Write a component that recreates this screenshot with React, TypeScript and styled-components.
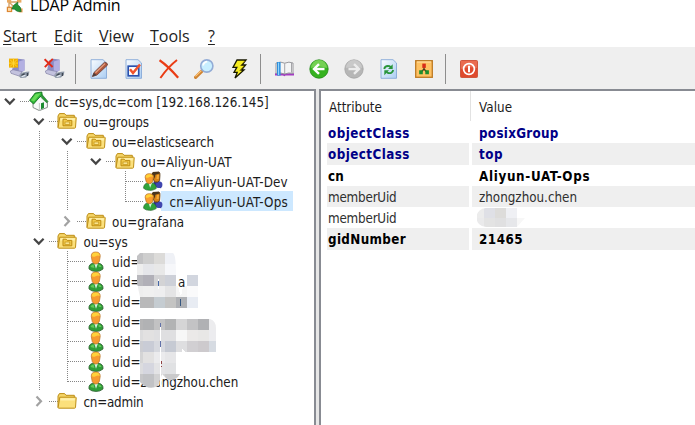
import React from "react";
import styled, { createGlobalStyle } from "styled-components";

const Global = createGlobalStyle`
  html, body { margin: 0; padding: 0; background: #fff; overflow: hidden; }
  * { box-sizing: border-box; }
`;

const Window = styled.div`
  width: 695px;
  height: 425px;
  display: flex;
  flex-direction: column;
  overflow: hidden;
  background: #fff;
  color: #1c1c1c;
  font: 13.3px "DejaVu Sans Condensed", "DejaVu Sans", sans-serif;
  font-stretch: condensed;
`;
const TitleBar = styled.header`
  height: 24px;
  flex: none;
  display: flex;
  padding-left: 5px;
  gap: 6px;
  svg { margin-top: -4px; }
`;
const Title = styled.span`
  font: 16px/20px "Open Sans", sans-serif;
  letter-spacing: -0.2px;
  color: #000;
  margin-top: -5px;
`;
const MenuBar = styled.nav`
  height: 23px;
  flex: none;
  display: flex;
  padding-left: 3px;
`;
const MenuItem = styled.span<{ $w: number; $ls?: number }>`
  width: ${(p) => p.$w}px;
  font: 16px/24px "Open Sans", sans-serif;
  letter-spacing: ${(p) => p.$ls ?? 0}px;
  color: #222;
  u { text-underline-offset: 2px; text-decoration-thickness: 1px; }
`;
const ToolBar = styled.div`
  height: 42px;
  flex: none;
  display: flex;
  align-items: center;
  padding: 1px 0 0 1.5px;
  background: #efefef;
`;
const ToolButton = styled.span`
  width: 35px;
  height: 35px;
  display: flex;
  align-items: center;
  justify-content: center;
`;
const Separator = styled.i`
  width: 1px;
  height: 30px;
  margin: 0 6px 0 3px;
  background: #8e8e8e;
`;
const Panels = styled.main`
  flex: 1;
  min-height: 0;
  display: flex;
  gap: 3px;
  background: #e6e6e6;
`;
const TreePanel = styled.section`
  position: relative;
  width: 316px;
  flex: none;
  border-top: 2px solid #888b92;
  border-right: 2px solid #888b92;
  background: #fff;
`;
const TreeRow = styled.div`
  height: 20px;
  display: flex;
  align-items: center;
`;
const Guide = styled.span`
  width: 28.7px;
  height: 20px;
  flex: none;
`;
const TreeIcon = styled.span`
  position: relative;
  width: 20px;
  height: 20px;
  flex: none;
  display: flex;
  align-items: center;
  justify-content: center;
`;
const TreeLabel = styled.span<{ $on?: boolean; $ls: number }>`
  height: 20px;
  line-height: 21px;
  margin-left: 2px;
  padding: 1px 5px 0 4px;
  white-space: nowrap;
  letter-spacing: ${(p) => p.$ls}px;
  background: ${(p) => (p.$on ? "#cde8ff" : "transparent")};
  box-shadow: ${(p) => (p.$on ? "-4px 0 #cde8ff" : "none")};
`;
const ValuePanel = styled.section`
  flex: 1;
  border-top: 2px solid #888b92;
  border-left: 2px solid #888b92;
  background: #fff;
  padding-left: 6px;
`;
const HeadRow = styled.div`
  display: grid;
  grid-template-columns: 142px 1fr;
  column-gap: 3px;
  height: 31px;
  line-height: 33px;
  span { padding-left: 2px; }
  span:first-child { border-right: 1px solid #e2e2e2; margin-right: -2px; height: 30px; }
  span:last-child { padding-left: 7px; letter-spacing: 0.1px; }
`;
const AttrRow = styled.div<{ $tone: "class" | "strong" | "plain" }>`
  display: grid;
  grid-template-columns: 142px 1fr;
  column-gap: 3px;
  height: 21.25px;
  line-height: 23px;
  font-weight: ${(p) => (p.$tone === "plain" ? 400 : 700)};
  color: ${(p) => (p.$tone === "class" ? "#000087" : p.$tone === "strong" ? "#000" : "#303030")};
  &:nth-child(odd) > span { background: #efefef; }
`;
const Cell = styled.span<{ $ls: number; $pad: number }>`
  height: 21.25px;
  padding-left: ${(p) => p.$pad}px;
  letter-spacing: ${(p) => p.$ls}px;
`;
const Censor = styled.svg<{ $x: number; $y: number }>`
  position: absolute;
  left: ${(p) => p.$x}px;
  top: ${(p) => p.$y}px;
`;
const Fragment = styled.span<{ $x: number; $y: number }>`
  position: absolute;
  left: ${(p) => p.$x}px;
  top: ${(p) => p.$y}px;
  line-height: 20px;
`;
const InlineMosaic = styled.svg`
  display: block;
  margin: 1px 0 0 5px;
`;

/* ---------- tree icons ---------- */
const Chevron = ({ open }: { open: boolean }) =>
  open ? (
    <path d="M5 7.8 L9.8 12.6 L14.6 7.8" fill="none" stroke="#454545" strokeWidth="2.2" />
  ) : (
    <path d="M7.5 5.5 L12 10.2 L7.5 15" fill="none" stroke="#a2a2a2" strokeWidth="2.2" />
  );

const House = () => (
  <svg width="20" height="20" viewBox="0 0 20 20">
    <path d="M4 9 L13 5 L18.4 11 V16.4 L10.4 19.6 L4 16.5Z" fill="#f7f9f9" stroke="#77817c" strokeWidth=".9" />
    <path d="M10.4 12 V19.6" stroke="#b5bcb9" strokeWidth=".8" />
    <path d="M12 12.2 L15 11.2 V17 L12 18.2Z" fill="#1c8c32" />
    <path d="M.6 9.4 L6.2 2 L12.8 1 L13.2 4.4 L10.6 6.2 L4.6 13Z" fill="#2fb53a" stroke="#12701d" strokeWidth=".9" />
    <path d="M2 9.3 L6.8 3 L11.8 2.2 L5 10.4Z" fill="#66dc55" />
    <path d="M13 3.6 L19 10.4 L17.8 11.8 L12.2 6.6" fill="#2a9a35" stroke="#1b6b28" strokeWidth=".6" />
  </svg>
);
const Folder = ({ plain }: { plain?: boolean }) => (
  <svg width="20" height="18" viewBox="0 0 20 18">
    <path d="M1 15.5 V4 L2.4 1.6 H7.6 L9 3.3 H17.3 V7" fill="#f5d568" stroke="#bd8e16" strokeWidth="1" />
    <path d="M2.8 5.2 H18.6 Q19.3 5.2 19.2 6 L18.5 15.4 Q18.4 16.2 17.6 16.2 H1.8 Q1 16.2 1.1 15.4Z" fill="#fbe07c" stroke="#bd8e16" strokeWidth="1" />
    <path d="M3.6 6.2 H17.9 L17.7 8.4 H3.4Z" fill="#fff0ab" />
    {!plain && (
      <>
        <path d="M6 13.8 V7.2 H9.2 L10.2 8.4 H14.8 V13.8Z" fill="#f3cb4c" stroke="#bd8b10" strokeWidth="1" />
        <rect x="8" y="10" width="4.8" height="2.3" fill="#ffeb9c" stroke="#c3941a" strokeWidth=".8" />
      </>
    )}
  </svg>
);
const Person = () => (
  <svg width="20" height="21" viewBox="0 0 20 21">
    <path d="M3 18 Q2.2 13 7.5 12 H12 Q17.7 13 17 18 Q14 20.7 10 20.4 Q5.5 20.6 3 18Z" fill="#2f9e38" stroke="#315e33" strokeWidth=".8" />
    <path d="M4.4 16 Q5 13.6 7.6 13.2 L8.4 17Z M15.6 16 Q15 13.6 12.4 13.2 L12.8 16Z" fill="#62ca58" />
    <path d="M8.2 12.2 L10 17.8 L12 12.2Z" fill="#d8f0df" />
    <path d="M5.3 5.5 Q5 1 9.7 1 Q14.5 1 14.2 5.5 L13.3 10.5 Q12 13 9.7 13 Q7.4 13 6.2 10.5Z" fill="#f79b2f" stroke="#b8742a" strokeWidth=".7" />
    <path d="M5.8 5 Q6 1.6 9.7 1.6 Q13.4 1.6 13.8 5 Q12 3.9 9.7 5.2 Q7 6.4 5.8 5Z" fill="#ffd23a" />
  </svg>
);
const Group = () => (
  <svg width="21" height="20" viewBox="0 0 21 20">
    <path d="M11 16 L19 17.5 Q21 11 16 10 L11 11Z" fill="#2b2f96" />
    <circle cx="17" cy="14" r="3.4" fill="#4046b0" />
    <path d="M9.5 4 Q9.5 .8 11 1 L16.8 .5 Q18 1 17.8 4 L17.4 9.5 Q16 12 12 11Z" fill="#d98417" stroke="#553817" strokeWidth=".9" />
    <path d="M9 3.2 L10.5 .6 L16.4 .5 L17.5 2.2 L13 3.4 L12.4 8 L11 4Z" fill="#49351c" />
    <path d="M14.5 3.6 H16.8 L16.4 8 H14.2Z" fill="#f7aa34" />
    <path d="M.6 17.6 Q.6 12.8 5 12 H9.5 Q14.4 13 13.8 18 Q10 20.3 7 19.8 Q3 20 .6 17.6Z" fill="#30a43a" stroke="#2c6830" strokeWidth=".7" />
    <path d="M5.8 12 L7.5 17 L9.5 12Z" fill="#dcf3e0" />
    <path d="M2.3 6.2 Q2.1 2.3 6.6 2.3 Q11 2.3 10.9 6.3 L10 10.8 Q8.8 12.8 6.8 12.8 Q4.6 12.8 3.3 10.8Z" fill="#fa9d2e" stroke="#ad6b20" strokeWidth=".7" />
    <path d="M2.8 6 Q3 2.9 6.7 2.9 Q10 2.9 10.4 5.6 Q8 4.6 6.2 6 Q4.2 7.2 2.8 6Z" fill="#ffd238" />
  </svg>
);

/* ---------- toolbar icons ---------- */
const Server = ({ remove }: { remove?: boolean }) => (
  <svg width="21" height="21" viewBox="0 0 21 21">
    <path d="M5 2.5 L9 .8 L15.5 1.6 V12.5 L9.5 16 L3 13Z" fill="#8c8cc4" />
    <path d="M9.8 3.4 L15.5 1.8 V12.5 L9.8 15.5Z" fill="#b3b0e2" />
    <path d="M1.4 13 L4 11.7 L13 13.6 L10 18 L2 15.3Z" fill="#c3c2de" stroke="#8482a8" strokeWidth=".7" />
    <path d="M10 18.6 L12.5 14.8 L17.5 13.8 L20.4 13.4 L19.8 16.6 L17 19.6 L11.8 20Z" fill="#8d97a6" />
    <path d="M12.5 17.6 L15.6 15.6 M18.5 15 V18" stroke="#3e4653" strokeWidth="1.4" />
    <path d="M12.6 18.6 L16.5 17.4" stroke="#e4ebf3" strokeWidth="1.1" />
    {remove ? (
      <path d="M.6 1.2 L8.6 9 M8.8 .8 L.8 9.2" stroke="#e02a18" strokeWidth="1.9" />
    ) : (
      <>
        <rect x="0" y=".6" width="9" height="9" fill="#efae00" />
        <path d="M1 1.6 L8 8.6 M8 1.6 L1 8.6 M4.5 .6 V9.6 M0 5.1 H9" stroke="#ffd839" strokeWidth=".9" />
      </>
    )}
  </svg>
);
const Sheet = ({ children }: { children: React.ReactNode }) => (
  <svg width="20" height="20" viewBox="0 0 20 20">
    <defs>
      <linearGradient id="sheet" x1="0" y1="0" x2="1" y2="1">
        <stop offset="0" stopColor="#fafdff" />
        <stop offset="1" stopColor="#abcdf2" />
      </linearGradient>
    </defs>
    <path d="M2 .7 H14 L17.5 4 V19.3 H2Z" fill="url(#sheet)" stroke="#87a9d8" strokeWidth=".9" />
    {children}
  </svg>
);
const Pencil = () => (
  <Sheet>
    <path d="M3.4 17.6 L5 13.5 L15.5 3.2 Q18.5 3.4 18.6 6 L8 16Z" fill="#b0583c" stroke="#67413b" strokeWidth=".8" />
    <path d="M6.4 13.8 L16 4.6" stroke="#e7a080" strokeWidth="1.2" />
    <path d="M3.4 17.6 L4.8 13.9 L7.6 16Z" fill="#4b3c3c" />
  </Sheet>
);
const Check = () => (
  <Sheet>
    <rect x="4.2" y="7.2" width="10.5" height="9.6" fill="#fff" stroke="#2850ae" strokeWidth="1.7" />
    <path d="M6 10.3 L9 14 L16 5.5" fill="none" stroke="#f0522c" strokeWidth="2.5" />
  </Sheet>
);
const Cross = () => (
  <svg width="20" height="20" viewBox="0 0 20 20">
    <path d="M.5 1.2 Q9 7 19.2 18.8" fill="none" stroke="#ea3c14" strokeWidth="2.3" />
    <path d="M18 1 Q9 8 1.4 19" fill="none" stroke="#ea3c14" strokeWidth="1.9" />
  </svg>
);
const Lens = () => (
  <svg width="20" height="20" viewBox="0 0 20 20">
    <path d="M1.6 18.3 L8 12" stroke="#cf8331" strokeWidth="3.2" strokeLinecap="round" />
    <path d="M1.4 17.4 L7.4 11.6" stroke="#ffc77b" strokeWidth="1.1" />
    <circle cx="12.8" cy="7" r="6.1" fill="#c8efff" stroke="#93acd6" strokeWidth="1.6" />
    <path d="M9.2 6.5 Q9.6 3 13.2 2.6" stroke="#fff" strokeWidth="1.8" fill="none" />
  </svg>
);
const Bolt = () => (
  <svg width="18" height="20" viewBox="0 0 18 20">
    <path d="M7 1 H16 L12 6 H15.6 L11.4 11 H14 L5 19 L7.2 13.4 H4 L6.8 8.4 H3Z" fill="#f7ed20" stroke="#171700" strokeWidth="1.3" />
    <path d="M15 2 L10.6 6.6 M14.2 7 L9.8 11.6" stroke="#806f00" strokeWidth="1" />
  </svg>
);
const Book = () => (
  <svg width="21" height="16" viewBox="0 0 21 16">
    <path d="M1 12.2 H20 V14.5 H11.5 L10.5 15.3 L9 14.5 H1Z" fill="#a33cc2" />
    <path d="M2 2 Q7 .2 10.7 2.2 Q15 .2 19 2 V12.4 Q14.5 11.2 10.7 13 Q7 11.3 2 12.4Z" fill="#f4f5f5" stroke="#8e8e93" strokeWidth=".9" />
    <path d="M10.7 2.3 V13 M17.5 2 V11.6" stroke="#9c9ca0" strokeWidth=".9" />
    <rect x="3" y="1" width="3.6" height="13.6" fill="#2f8fdc" />
    <path d="M4.6 1.6 V14" stroke="#9cddff" strokeWidth="1" />
  </svg>
);
const RoundArrow = ({ back }: { back?: boolean }) => (
  <svg width="20" height="20" viewBox="0 0 20 20">
    <circle cx="10" cy="10" r="9.2" fill={back ? "#35b21f" : "#b6b6b6"} stroke={back ? "#238b18" : "#a4a4a4"} strokeWidth=".8" />
    <path d="M2 9 A8 8 0 0 1 18 9 Q10 6 2 9Z" fill={back ? "#74d154" : "#c9c9c9"} />
    <path d={back ? "M15.5 10 H5.5 M10 5.2 L5 10 L10 14.8" : "M4.5 10 H14.5 M10 5.2 L15 10 L10 14.8"} stroke={back ? "#fff" : "#ececec"} strokeWidth="2.4" fill="none" />
  </svg>
);
const Refresh = () => (
  <Sheet>
    <path d="M5.2 10 Q6 6.3 10.5 7.2 L12 8.2" fill="none" stroke="#29953b" strokeWidth="1.8" />
    <path d="M13.7 5.3 V10 H9Z" fill="#29953b" />
    <path d="M14.2 11 Q13.3 15 9 14 L7.5 13" fill="none" stroke="#29953b" strokeWidth="1.8" />
    <path d="M5.3 16.3 V11.3 H10Z" fill="#29953b" />
  </Sheet>
);
const Schema = () => (
  <svg width="18" height="18" viewBox="0 0 18 18">
    <rect x=".7" y=".7" width="16.6" height="16.6" fill="#ffc263" stroke="#bd7a23" strokeWidth="1.3" />
    <path d="M2 2 H16" stroke="#ffe2a8" strokeWidth="1" />
    <path d="M9 6 V9 L5.5 13 M9 9 L12.5 13" stroke="#503b17" strokeWidth="1.3" fill="none" />
    <rect x="7.3" y="3.6" width="3.5" height="4.3" fill="#d82c18" />
    <path d="M4.2 10.3 H7.8 V14.2 H4.2Z M10.3 10.3 H13.9 V14.2 H10.3Z" fill="#1f8d2c" />
  </svg>
);
const Power = () => (
  <svg width="18" height="18" viewBox="0 0 18 18">
    <rect x=".5" y=".5" width="17" height="17" rx="1" fill="#df4a2e" stroke="#cf583f" />
    <path d="M1 1 H17 V8 Q9 6 1 9Z" fill="#ea6c50" />
    <circle cx="9" cy="9" r="5.4" fill="none" stroke="#fff" strokeWidth="1.7" />
    <path d="M9 5.8 V12.2" stroke="#fff" strokeWidth="2" />
  </svg>
);
const AppLogo = () => (
  <svg width="19" height="18" viewBox="0 0 19 18">
    <path d="M4 6 H12 M4 6 L10 12 M4 6 V14" stroke="#d4a268" strokeWidth="1.4" />
    <rect x="2" y="2.6" width="4.2" height="4" fill="#e9aa62" />
    <rect x="12" y="2.6" width="4.4" height="4" fill="#e9aa62" />
    <rect x="2.4" y="11.3" width="4.2" height="4.2" fill="#ffdba6" stroke="#dc8735" strokeWidth="1.2" />
    <rect x="13.6" y="12.4" width="4" height="4" fill="#f4a45a" />
    <path d="M12.8 6 V9 Q16.4 10.6 16.2 15.7 Q11.6 16 9.4 13.2 L6.8 13 L8.4 9.6Z" fill="#249336" stroke="#12682a" strokeWidth=".6" />
  </svg>
);

/* ---------- data ---------- */
type IconKind = "house" | "folder" | "plain" | "group" | "person";
interface Node { level: number; label: string; icon: IconKind; open?: boolean; guides?: number[]; last?: boolean; on?: boolean; ls?: number }
const nodes: Node[] = [
  { level: 0, label: "dc=sys,dc=com [192.168.126.145]", icon: "house", open: true, ls: 0.03 },
  { level: 1, label: "ou=groups", icon: "folder", open: true },
  { level: 2, label: "ou=elasticsearch", icon: "folder", open: true, guides: [1], ls: -0.1 },
  { level: 3, label: "ou=Aliyun-UAT", icon: "folder", open: true, guides: [1, 2], ls: 0.1 },
  { level: 4, label: "cn=Aliyun-UAT-Dev", icon: "group", guides: [1, 2], ls: 0.17 },
  { level: 4, label: "cn=Aliyun-UAT-Ops", icon: "group", guides: [1, 2], last: true, on: true, ls: 0.17 },
  { level: 2, label: "ou=grafana", icon: "folder", open: false, guides: [1], ls: 0.1 },
  { level: 1, label: "ou=sys", icon: "folder", open: true },
  ...Array.from({ length: 7 }, (_, i): Node => ({
    level: 2, label: i === 6 ? "uid=zhongzhou.chen" : "uid=", icon: "person", guides: [1], last: i === 6,
  })),
  { level: 1, label: "cn=admin", icon: "plain", open: false, ls: -0.2 },
];
const icons: Record<IconKind, React.ReactNode> = {
  house: <House />, folder: <Folder />, plain: <Folder plain />, group: <Group />, person: <Person />,
};
const dots = { stroke: "#858585", strokeWidth: 1, strokeDasharray: "1 1" };

const TreeItem = ({ node }: { node: Node }) => (
  <TreeRow>
    {Array.from({ length: node.level }, (_, l) => (
      <Guide key={l}>
        {node.guides?.includes(l) && (
          <svg width="28" height="20"><path d="M10.5 0 V20" {...dots} /></svg>
        )}
      </Guide>
    ))}
    <Guide>
      <svg width="29" height="20">
        {node.open === undefined ? (
          <path d={`M10.5 0 V${node.last ? 11 : 20} M11 10.5 H29`} fill="none" {...dots} />
        ) : (
          <>
            <Chevron open={node.open} />
            <path d="M20 10.5 H29" {...dots} />
          </>
        )}
      </svg>
    </Guide>
    <TreeIcon>{icons[node.icon]}</TreeIcon>
    <TreeLabel $on={node.on} $ls={node.ls ?? -0.02}>{node.label}</TreeLabel>
  </TreeRow>
);

/* Each strip: left edge, top, height and the colours of its 11px cells; the first cell ends at x = 143. */
const shades: [number, number, number, string[]][] = [
  [137, 0, 11, ["#c2c2c4", "#cecece", "#dcdbd9", "#eff1f6"]],
  [137, 11, 11, ["#eeeeee", "#e5e6ea", "#e8e8e8", "#f6f7fa"]],
  [137, 22, 11, ["#b8b8bd", "#b1b0b8", "#d3d3d5", "#cdd0d8", "#ffffff00", "#d2d6df"]],
  [138, 33, 11, ["#eeeeee", "#f0f0f0", "#eeeeef", "#e4e4e5", "#f5f5f5", "#fafafb"]],
  [140, 44, 11, ["#b9b9ba", "#b9b9ba", "#c5ccd1", "#c4c4c3", "#afb1b5", "#e8ecf3"]],
  [140, 66, 11, ["#b5b5b6", "#b1b2b4", "#c2c2c3", "#b2b3b4", "#d5d5d6", "#c3c3c5", "#b0b1b4", "#ececee"]],
  [140, 77, 11, ["#dcdcdd", "#e2e1e1", "#dfdfe1", "#dfdfe1", "#f7f7f7", "#ebe9e8", "#e8e7e6", "#ececef"]],
  [140, 88, 11, ["#cccdd2", "#c9ccd6", "#d7d9df", "#c6cad3", "#dedee0", "#d1cfd2", "#cdcacd", "#d6dbe2"]],
  [140, 99, 11, ["#d4d4d5", "#e2e1e1", "#ebebed", "#e6e6e8"]],
  [140, 110, 11, ["#dcdcde", "#d5d6df", "#e3e3e5", "#e0e1e3"]],
  [140, 121, 14, ["#c6c6c8", "#c1c2c5", "#d2d2d3", "#cacacb"]],
];

const TreeMosaic = () => (
  <Censor $x={137} $y={162} width="80" height="139" viewBox="137 0 80 139" shapeRendering="crispEdges">
    <defs>
      <clipPath id="smudge">
        <path d="M140 0 H173 Q176 1 176 22 H179 L181 33 L186 22 H198 V55 H140 V44 L137 30 V3Z M140 66 H210 Q216 68 216 75 V99 H176 V121 H180 Q176 128 168 127 L162 121 L158 133 Q148 138 140 129Z" />
      </clipPath>
    </defs>
    <g clipPath="url(#smudge)">
      {shades.map(([start, y, h, row]) =>
        row.map((fill, i) => {
          const left = i === 0 ? start : 132 + 11 * i;
          const right = 143 + 11 * i + (y === 121 && i === 3 ? 5 : 0);
          return <rect key={`${y}-${i}`} x={left} y={y} width={right - left} height={h} fill={fill} />;
        })
      )}
    </g>
    <path d="M160.5 70 V133" stroke="#fff" strokeWidth="1" />
    <path d="M158.5 26 V36" stroke="#fff" />
    <path d="M158.5 28 V33" stroke="#4668a8" />
    <path d="M180.5 46 V53" stroke="#35567f" />
    <path d="M160.5 70 V74 M160.5 88 V94" stroke="#6272a8" />
    <path d="M161 108 V114" stroke="#914242" strokeDasharray="3 2" />
    <path d="M178 33 H183 L181 44Z M182 99 V95 L185 99Z" fill="#fff" />
  </Censor>
);

interface Attr { name: string; value: React.ReactNode; tone: "class" | "strong" | "plain"; ls: [number, number] }
const rows: Attr[] = [
  { name: "objectClass", value: "posixGroup", tone: "class", ls: [0.45, 0.3] },
  { name: "objectClass", value: "top", tone: "class", ls: [0.45, 0.5] },
  { name: "cn", value: "Aliyun-UAT-Ops", tone: "strong", ls: [0.2, 0.67] },
  { name: "memberUid", value: "zhongzhou.chen", tone: "plain", ls: [-0.2, 0] },
  {
    name: "memberUid",
    tone: "plain",
    ls: [-0.2, 0],
    value: (
      <InlineMosaic width="48" height="20">
        <clipPath id="pill"><path d="M9 0 H40 V10 H48 L40 19 H9 A9.5 9.5 0 0 1 9 0Z" /></clipPath>
        <g clipPath="url(#pill)" shapeRendering="crispEdges">
          {["#ececec", "#dfe0e6", "#dddcda", "#eff0f4", "#fafafa"].map((c, i) => (
            <rect key={c} x={i ? 7 + (i - 1) * 11 : 0} y="0" width={i ? 11 : 7} height="10" fill={c} />
          ))}
          {["#eaeaeb", "#e3e3e3", "#e0e0e1", "#e6e7ea", "#f7f7f7"].map((c, i) => (
            <rect key={c} x={i ? 7 + (i - 1) * 11 : 0} y="10" width={i ? 11 : 7} height="10" fill={c} />
          ))}
        </g>
      </InlineMosaic>
    ),
  },
  { name: "gidNumber", value: "21465", tone: "strong", ls: [0.35, 0.5] },
];

const toolGroups: React.ReactNode[][] = [
  [<Server />, <Server remove />],
  [<Pencil />, <Check />, <Cross />, <Lens />, <Bolt />],
  [<Book />, <RoundArrow back />, <RoundArrow />, <Refresh />, <Schema />],
  [<Power />],
];

export default function App() {
  return (
    <Window>
      <Global />
      <TitleBar><AppLogo /><Title>LDAP Admin</Title></TitleBar>
      <MenuBar>
        <MenuItem $w={51} $ls={-0.4}><u>S</u>tart</MenuItem>
        <MenuItem $w={45}><u>E</u>dit</MenuItem>
        <MenuItem $w={51}><u>V</u>iew</MenuItem>
        <MenuItem $w={58}><u>T</u>ools</MenuItem>
        <MenuItem $w={20}><u>?</u></MenuItem>
      </MenuBar>
      <ToolBar>
        {toolGroups.map((group, g) => (
          <React.Fragment key={g}>
            {g > 0 && <Separator />}
            {group.map((icon, i) => <ToolButton key={i}>{icon}</ToolButton>)}
          </React.Fragment>
        ))}
      </ToolBar>
      <Panels>
        <TreePanel>
          {nodes.map((n, i) => <TreeItem key={i} node={n} />)}
          <TreeMosaic />
          <Fragment $x={178} $y={182}>a</Fragment>
        </TreePanel>
        <ValuePanel>
          <HeadRow><span>Attribute</span><span>Value</span></HeadRow>
          {rows.map((r, i) => (
            <AttrRow key={i} $tone={r.tone}>
              <Cell $pad={1} $ls={r.ls[0]}>{r.name}</Cell>
              <Cell $pad={typeof r.value === "string" ? 7 : 0} $ls={r.ls[1]}>{r.value}</Cell>
            </AttrRow>
          ))}
        </ValuePanel>
      </Panels>
    </Window>
  );
}
